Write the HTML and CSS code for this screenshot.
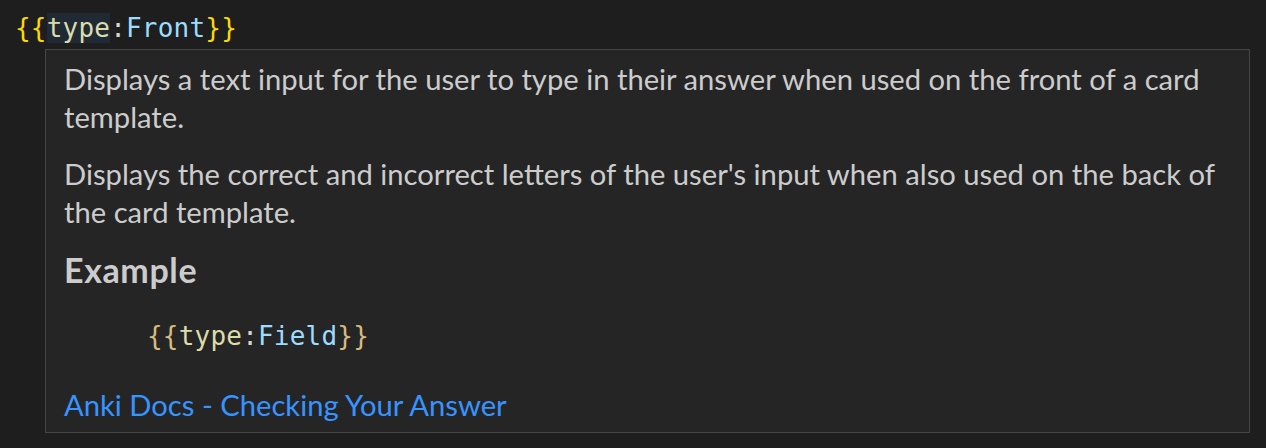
FILE: index.html
```html
<!DOCTYPE html>
<html>
<head>
<meta charset="utf-8">
<link rel="stylesheet" href="styles.css">
</head>
<body>
<div class="editor-line"><span class="brace">{{</span><span class="kw sel">type</span><span class="colon">:</span><span class="field">Front</span><span class="brace">}}</span></div>
<div class="hover">
  <p class="para">Displays a text input for the user to type in their answer when used on the front of a card template.</p>
  <p class="para">Displays the correct and incorrect letters of the user's input when also used on the back of the card template.</p>
  <h3 class="heading">Example</h3>
  <pre class="code"><span class="brace2">{{</span><span class="kw">type</span><span class="colon">:</span><span class="field">Field</span><span class="brace2">}}</span></pre>
  <a class="link" href="#">Anki Docs - Checking Your Answer</a>
</div>
</body>
</html>
```
FILE: styles.css
```css
html, body {
  margin: 0;
  padding: 0;
  background: #1e1e1e;
  height: 100%;
}
body {
  font-family: "Lato", "Open Sans", sans-serif;
  color: #cccccc;
}
.editor-line {
  margin-top: 9px;
  margin-bottom: 1px;
  padding-left: 15px;
  height: 39px;
  font-family: "DejaVu Sans Mono", "Liberation Mono", monospace;
  font-size: 26px;
  letter-spacing: 0.2px;
  line-height: 39px;
  white-space: pre;
}
.brace { color: #ffd700; }
.brace2 { color: #d7ba7d; }
.kw { color: #dcdcaa; }
.colon { color: #d4d4d4; }
.field { color: #9cdcfe; }
.sel { background: #1f2a35; }
.hover {
  margin-left: 45px;
  width: 1205px;
  height: 384px;
  box-sizing: border-box;
  border: 1px solid #454545;
  background: #252526;
  padding: 10px 18px 0 18px;
}
.para {
  margin: 0 0 19px 0;
  font-size: 29.2px;
  line-height: 38px;
}
.heading {
  margin: 0;
  font-size: 34px;
  letter-spacing: 0.6px;
  font-weight: 700;
  line-height: 40px;
}
.code {
  margin: 27px 0 0 83px;
  font-family: "DejaVu Sans Mono", "Liberation Mono", monospace;
  font-size: 26px;
  letter-spacing: 0.2px;
  line-height: 39px;
}
.link {
  display: block;
  margin-top: 30px;
  font-size: 29.2px;
  line-height: 38px;
  color: #3794ff;
  text-decoration: none;
}
```
